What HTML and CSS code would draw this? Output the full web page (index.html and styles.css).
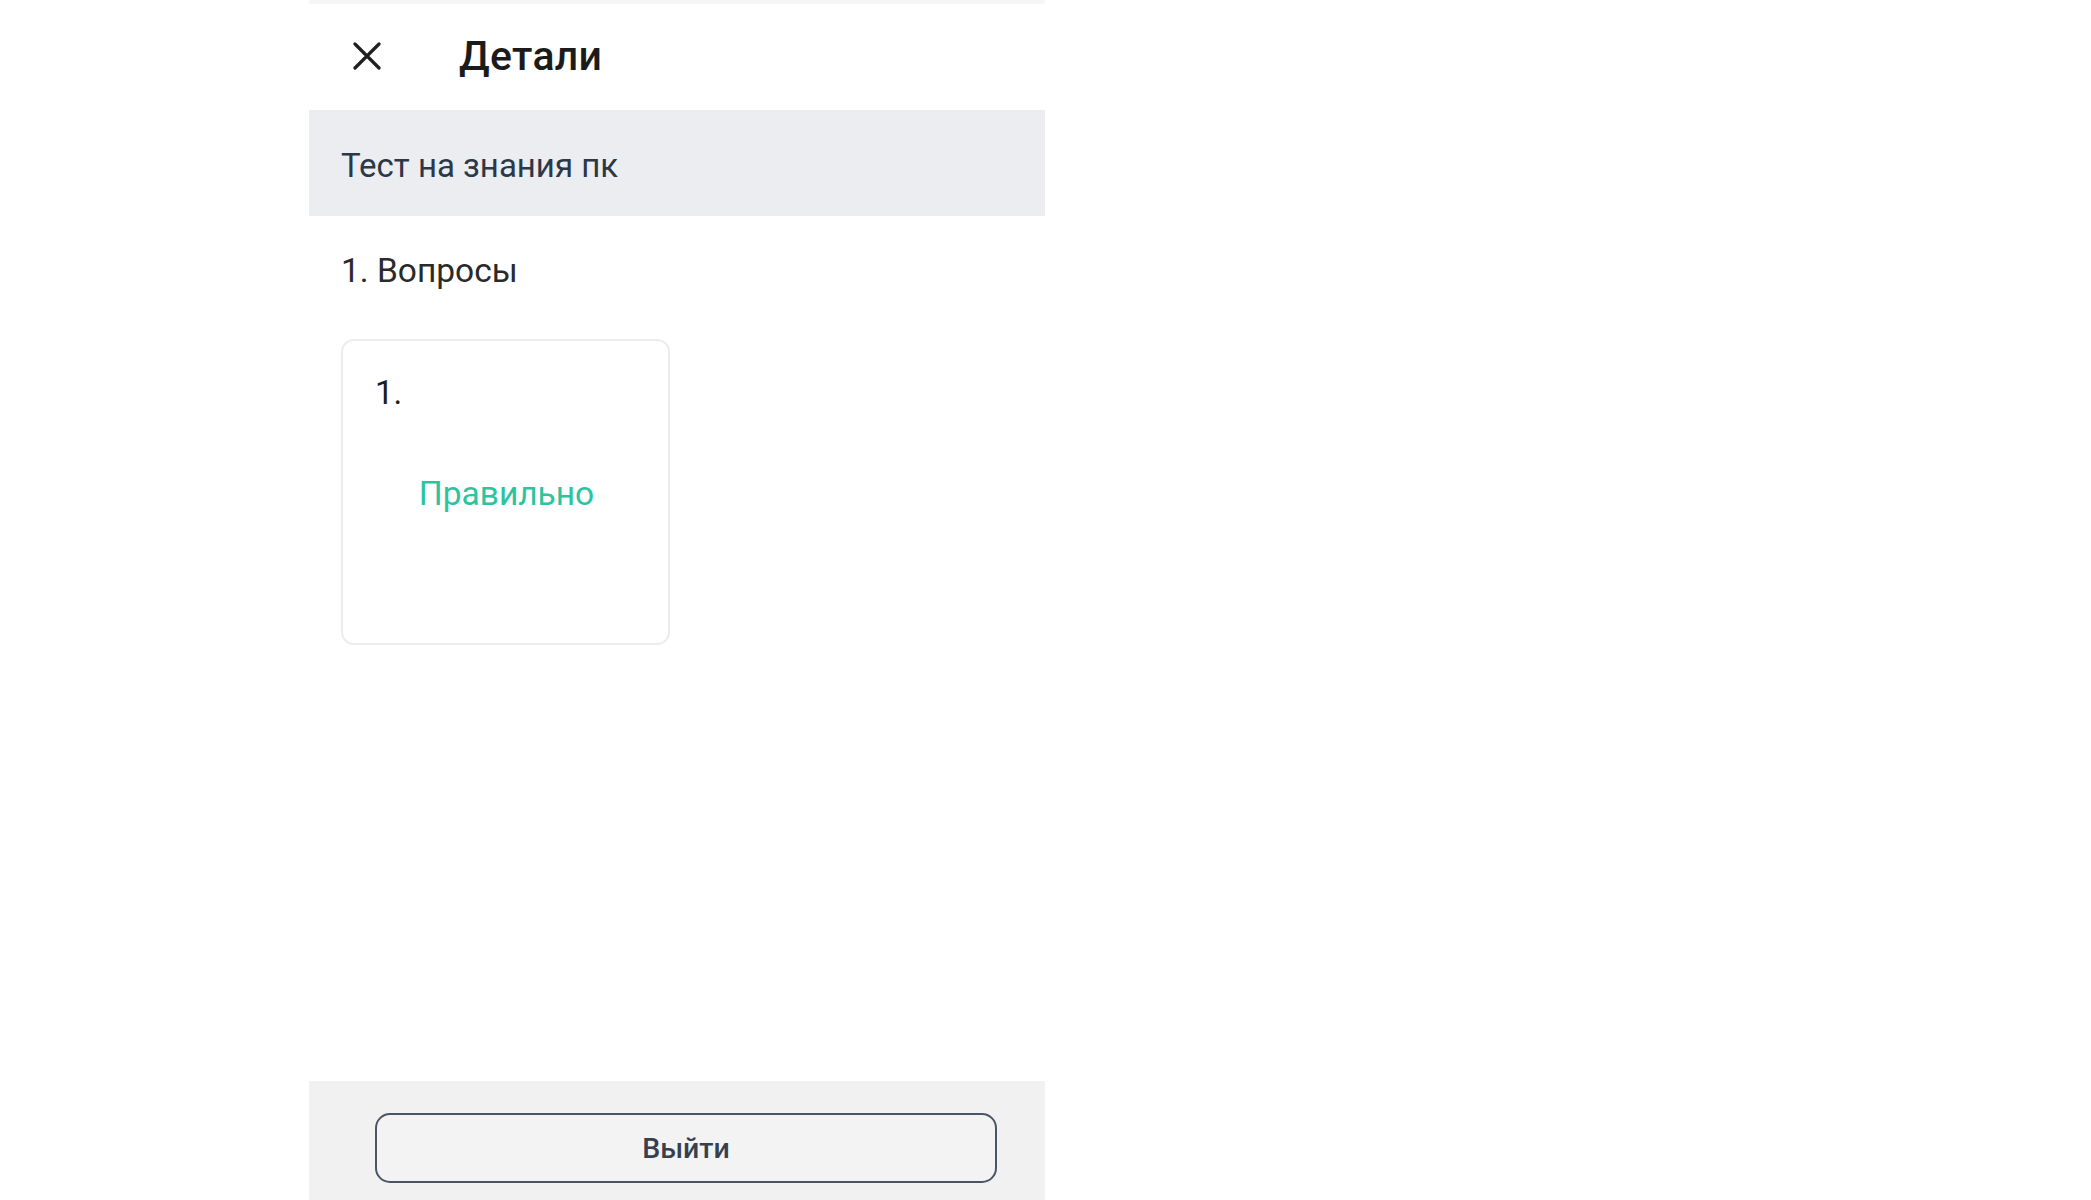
FILE: index.html
```html
<!DOCTYPE html>
<html lang="ru">
<head>
<meta charset="utf-8">
<title>Детали</title>
<link rel="stylesheet" href="styles.css">
</head>
<body>
<div class="panel">
  <div class="topline"></div>
  <header class="header">
    <button class="close" aria-label="Закрыть">
      <svg width="30" height="28" viewBox="0 0 30 28"><path d="M3 2 L27 26 M27 2 L3 26" stroke="#1f1f1f" stroke-width="3.2" stroke-linecap="round"/></svg>
    </button>
    <h1 class="title">Детали</h1>
  </header>
  <div class="subject">Тест на знания пк</div>
  <div class="content">
    <div class="section-title">1. Вопросы</div>
    <div class="cards">
      <div class="card">
        <div class="card-num">1.</div>
        <div class="card-status">Правильно</div>
      </div>
    </div>
  </div>
  <footer class="footer">
    <button class="exit">Выйти</button>
  </footer>
</div>
</body>
</html>
```
FILE: styles.css
```css
* { box-sizing: border-box; }
html, body { margin: 0; padding: 0; background: #ffffff; }
body { font-family: Roboto, "Noto Sans", sans-serif; }

.panel {
  margin-left: 309px;
  width: 736px;
  height: 1200px;
  display: flex;
  flex-direction: column;
  background: #ffffff;
}
.topline { height: 4px; background: #f6f6f7; flex: none; }

.header {
  height: 106px;
  flex: none;
  display: flex;
  align-items: center;
  padding-left: 43px;
  padding-bottom: 2px;
}
.close {
  border: 0;
  background: none;
  padding: 0;
  width: 30px;
  height: 28px;
  display: flex;
  cursor: pointer;
}
.title {
  margin: 0 0 0 77px;
  font-size: 41px;
  font-weight: 500;
  color: #1b1b1b;
  letter-spacing: 0.3px;
}

.subject {
  height: 106px;
  flex: none;
  background: #ebedf0;
  display: flex;
  align-items: center;
  padding-left: 32px;
  padding-top: 5px;
  font-size: 33px;
  color: #2c3747;
}

.content { flex: 1; padding: 0 0 0 32px; }
.section-title {
  margin-top: 35px;
  font-size: 33.5px;
  line-height: 40px;
  color: #2a2a2a;
}
.cards { display: flex; margin-top: 48px; }
.card {
  width: 329px;
  height: 306px;
  border: 2px solid #ececee;
  border-radius: 13px;
  padding: 34px 0 0 32px;
  display: flex;
  flex-direction: column;
}
.card-num { font-size: 33px; line-height: 36px; color: #1e1e1e; }
.card-status {
  margin-top: 63px;
  padding-right: 30px;
  text-align: center;
  font-size: 33.5px;
  line-height: 40px;
  color: #2bc49e;
}

.footer {
  height: 119px;
  flex: none;
  background: #f1f1f2;
  padding: 32px 0 0 66px;
}
.exit {
  width: 622px;
  height: 70px;
  border: 2.5px solid #4a5566;
  border-radius: 15px;
  background: #f3f3f4;
  font-family: Roboto, "Noto Sans", sans-serif;
  font-size: 28.5px;
  font-weight: 500;
  color: #36404f;
  cursor: pointer;
}
```
